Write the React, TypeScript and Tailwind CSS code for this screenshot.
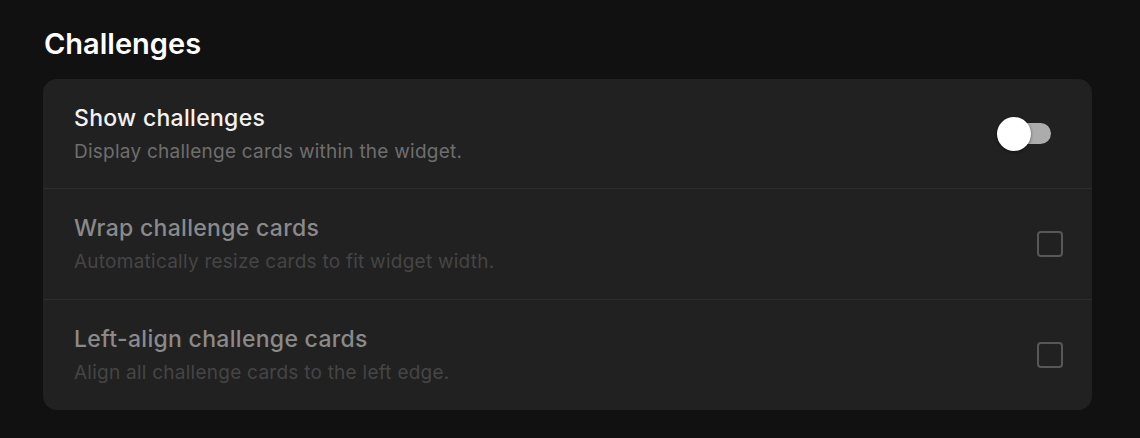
import React from "react";

function Row({
  title,
  desc,
  disabled,
  control,
  border,
  h,
}: {
  title: string;
  desc: string;
  disabled?: boolean;
  control: React.ReactNode;
  border?: boolean;
  h: string;
}) {
  return (
    <div
      className={`flex ${h} items-center justify-between pl-[31px] pr-[29px] ${
        border ? "border-t border-[#2c2c2c]" : ""
      }`}
    >
      <div className="flex flex-col gap-[8px]">
        <div
          className={`text-[23px] leading-[28px] font-medium tracking-[0.3px] ${
            disabled ? "text-[#8a8a8a]" : "text-[#f2f2f2]"
          }`}
        >
          {title}
        </div>
        <div
          className={`text-[19px] leading-[24px] tracking-[0.25px] ${
            disabled ? "text-[#454545]" : "text-[#6e6e6e]"
          }`}
        >
          {desc}
        </div>
      </div>
      {control}
    </div>
  );
}

function Toggle() {
  return (
    <div className="relative mr-[12px] h-[21px] w-[51px] rounded-full bg-[#acacac]">
      <div className="absolute left-[-3px] top-[-6px] h-[34px] w-[34px] rounded-full bg-white shadow-[0_1px_3px_rgba(0,0,0,0.5)]" />
    </div>
  );
}

function Checkbox() {
  return (
    <div className="h-[26px] w-[26px] rounded-[4px] border-[2.5px] border-[#575757]" />
  );
}

export default function App() {
  return (
    <div
      className="h-[438px] w-[1140px] bg-[#111111] pl-[43px] pr-[48px] pt-[26px]"
      style={{ fontFamily: "Inter, 'Noto Sans', sans-serif" }}
    >
      <h2 className="ml-[1px] text-[29px] leading-[36px] font-semibold text-white">
        Challenges
      </h2>
      <div className="mt-[17px] overflow-hidden rounded-[14px] bg-[#212121]">
        <Row
          h="h-[109px]"
          title="Show challenges"
          desc="Display challenge cards within the widget."
          control={<Toggle />}
        />
        <Row
          h="h-[111px]"
          title="Wrap challenge cards"
          desc="Automatically resize cards to fit widget width."
          disabled
          border
          control={<Checkbox />}
        />
        <Row
          h="h-[111px]"
          title="Left-align challenge cards"
          desc="Align all challenge cards to the left edge."
          disabled
          border
          control={<Checkbox />}
        />
      </div>
    </div>
  );
}
